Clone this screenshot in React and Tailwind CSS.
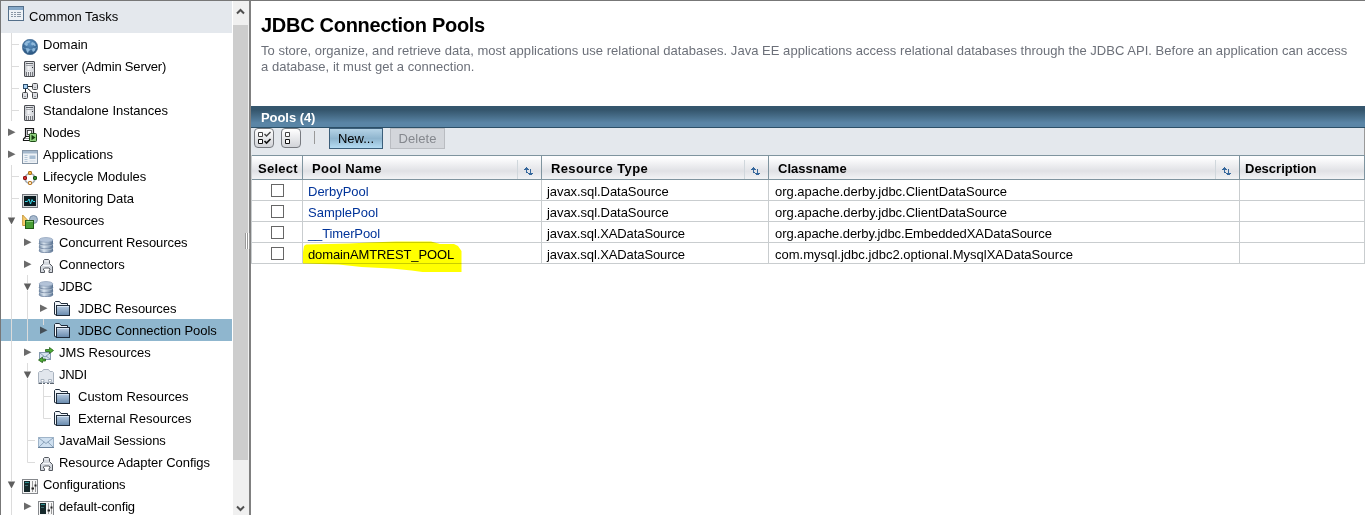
import React from "react";

const LINE = "#dcdcdc";

function Server() {
  return (
    <>
      <defs>
        <linearGradient id="srv" x1="0" x2="1">
          <stop offset="0" stopColor="#b9bcc1" />
          <stop offset=".4" stopColor="#f4f5f7" />
          <stop offset="1" stopColor="#c3c6cc" />
        </linearGradient>
      </defs>
      <rect x="2.5" y=".5" width="10" height="15" rx=".5" fill="url(#srv)" stroke="#4b4d52" />
      <path d="M4 2.5h7" stroke="#5f6268" />
      <path d="M4 4.500h7" stroke="#a3a6ac" />
      <path d="M10 6.500h1" stroke="#2f3236" />
      <path d="M3 9.500h9" stroke="#d9dbe0" />
      <path d="M4.500 11v4M6.500 11v4M8.500 11v4M10.500 11v4" stroke="#74777d" />
    </>
  );
}

function Database() {
  return (
    <>
      <defs>
        <linearGradient id="dbg" x1="0" x2="1">
          <stop offset="0" stopColor="#7087a2" />
          <stop offset=".35" stopColor="#d9e4ef" />
          <stop offset="1" stopColor="#56708f" />
        </linearGradient>
      </defs>
      <path d="M1 3v10.500c0 1.400 3 2.300 7 2.300s7-.9 7-2.300V3z" fill="url(#dbg)" />
      <path d="M1 6c0 1.300 3 2 7 2s7-.7 7-2M1 9.800c0 1.300 3 2 7 2s7-.7 7-2M1 13.600c0 1.300 3 2 7 2s7-.7 7-2" fill="none" stroke="#6d829e" strokeWidth=".8" />
      <path d="M1 7c0 1.300 3 2 7 2s7-.7 7-2M1 10.800c0 1.300 3 2 7 2s7-.7 7-2" fill="none" stroke="#e9eff6" strokeWidth=".4" />
      <ellipse cx="8" cy="2.900" rx="6.800" ry="2.400" fill="#b3c3d8" stroke="#8ea1ba" strokeWidth=".7" />
    </>
  );
}

function Folder() {
  return (
    <>
      <defs>
        <linearGradient id="fld" x1="0" y1="0" x2="0" y2="1">
          <stop offset="0" stopColor="#b9cde3" />
          <stop offset="1" stopColor="#6789ac" />
        </linearGradient>
      </defs>
      <path d="M.500 13.500V1.500L1.500.5h4l1.500 2h6.500v2" fill="#f1f5f9" stroke="#1f2c3b" />
      <path d="M.500 12.500l1.500 2h1" fill="none" stroke="#1f2c3b" />
      <rect x="2.500" y="4.500" width="13" height="10" fill="url(#fld)" stroke="#1f2c3b" />
      <path d="M3 5.500h12" stroke="#d8e5f2" />
    </>
  );
}

function Connector() {
  return (
    <>
      <path
        d="M5.500 4.500V1.500L6.500.5h4l1 1v3l3 3v6h-3.500v-2l1-.5v-1l-1-1H6.500l-1 1v1l1 .5v2H2.500v-6z"
        fill="#d4d8de"
        stroke="#54585f"
      />
      <path d="M6.500 2h4M5 6.500h7" stroke="#f7f8fa" />
    </>
  );
}

function Config() {
  return (
    <>
      <rect x=".5" y=".5" width="15" height="14" fill="#f6f6f6" stroke="#85888c" />
      <rect x="2" y="2" width="6" height="11" fill="#16292b" />
      <path d="M3 3.500h4" stroke="#2c8f8f" />
      <path d="M3 6.500h3" stroke="#3b6a6c" />
      <path d="M10.500 2v11M13.500 2v11" stroke="#999" />
      <path d="M9.500 9.500h2.500M12.500 6.500h2" stroke="#222" strokeWidth="2" />
    </>
  );
}

const glyphs = {
  globe: (
    <>
      <defs>
        <radialGradient id="glb" cx=".5" cy=".3" r=".7">
          <stop offset="0" stopColor="#5e94c4" />
          <stop offset="1" stopColor="#28527c" />
        </radialGradient>
      </defs>
      <circle cx="8" cy="8" r="7.700" fill="url(#glb)" stroke="#3c6690" strokeWidth=".6" />
      <path d="M2 5l2-2.500 3-1 1.500 1L7 4 5.500 4.500 6 6 4.500 7 3 6zM10 3l2.500 1 1.500 2.500-1.500.5-1-1L10 6.500 9 5zM4 9l3 .5 1 1.500-1.500 1.500-.5 2L4.500 12zM11 9l2.500.5-.5 2L11 13l-1-2z" fill="#8fb9db" />
      <path d="M1 8.500c4 2.500 10 2.500 14 0" fill="none" stroke="#82b2d8" strokeWidth=".5" />
    </>
  ),
  server: <Server />,
  clusters: (
    <>
      <path d="M3.500 5v5M6 3.500h5M5 5l7 6" stroke="#222" fill="none" />
      <rect x="1.500" y="1.500" width="4" height="4" fill="#a9d2f4" stroke="#2c4d6c" />
      <rect x="10.500" y=".5" width="5" height="6" rx="1" fill="#dcdee2" stroke="#46484d" />
      <rect x=".5" y="9.500" width="5" height="6" rx="1" fill="#dcdee2" stroke="#46484d" />
      <rect x="10.500" y="9.500" width="5" height="6" rx="1" fill="#dcdee2" stroke="#46484d" />
      <path d="M12 4.500h2M2 13.500h2M12 13.500h2" stroke="#9b9ea4" />
    </>
  ),
  nodes: (
    <>
      <path d="M3.500 1.500h8v8h-8z" fill="#d6d8dc" stroke="#151515" strokeWidth="1.200" />
      <rect x="5.500" y="3.500" width="4" height="4" fill="#fff" stroke="#333" strokeWidth=".8" />
      <path d="M3.500 10L1.500 12v1.500h8" fill="none" stroke="#151515" strokeWidth="1.200" />
      <path d="M3 11.500h5" stroke="#999" />
      <rect x="7.500" y="6.500" width="7" height="8" rx="1" fill="#8fd07e" stroke="#1d4c16" />
      <path d="M9.500 7.800v5.400l4-2.700z" fill="#143d0e" />
    </>
  ),
  apps: (
    <>
      <rect x=".5" y="1.500" width="15" height="13" fill="#eef2f6" stroke="#8494a5" />
      <rect x="1" y="2" width="14" height="2.500" fill="#a4b8cc" />
      <path d="M2.500 6.500h3M2.500 8.500h3M2.500 10.500h3M2.500 12.500h3" stroke="#b5c7d8" />
      <rect x="7.500" y="6.500" width="6" height="3.500" fill="#a8bed3" />
      <rect x="7.500" y="11" width="6" height="2" fill="#dfe6ed" />
    </>
  ),
  lifecycle: (
    <>
      <circle cx="8" cy="7.500" r="5" fill="none" stroke="#a2a9b1" strokeWidth="1.600" />
      <rect x="6.500" y=".5" width="3" height="3" rx=".5" fill="#f3b13b" stroke="#a8711c" />
      <rect x="11.500" y="5.500" width="3" height="3" rx=".5" fill="#318c2c" stroke="#174e16" />
      <rect x="1.500" y="5.500" width="3" height="3" rx=".5" fill="#d22f2f" stroke="#8b1717" />
      <rect x="6.500" y="10.500" width="3" height="3" rx=".5" fill="#fbe3c0" stroke="#b87b2b" />
    </>
  ),
  monitor: (
    <>
      <rect x=".5" y="1.500" width="15" height="13" fill="#d3d6d9" stroke="#74787d" />
      <rect x="2" y="3" width="12" height="10" fill="#0a1b20" />
      <path d="M3 8.500h2.500L7 6l1.500 5L10 6.500l1 2h2" fill="none" stroke="#38d5e3" />
    </>
  ),
  resources: (
    <>
      <path d="M.700 0v10.500h10z" fill="#fbcf70" stroke="#c08e2c" strokeWidth=".9" />
      <circle cx="11.500" cy="4.500" r="4" fill="#a9bbcf" stroke="#6f87a1" strokeWidth=".9" />
      <rect x="3.500" y="5.500" width="8" height="8" fill="#489f36" stroke="#1f5916" />
      <path d="M4.500 6.500h6.500" stroke="#8fce7c" />
    </>
  ),
  database: <Database />,
  connector: <Connector />,
  folder: <Folder />,
  jms: (
    <>
      <rect x="1.500" y="5.500" width="11" height="7" fill="#d6e2ee" stroke="#8499ae" />
      <path d="M2 6l5 4 5-4M2 12l4-3M12 12L8 9" fill="none" stroke="#7890a8" strokeWidth=".8" />
      <path d="M7.500 2.500h4V.5l4 3-4 3v-2h-4z" fill="#4fae35" stroke="#23611a" strokeWidth=".8" />
      <path d="M7.500 12h-3v-1.800L.5 13l4 2.700v-1.700h3z" fill="#4fae35" stroke="#23611a" strokeWidth=".8" />
    </>
  ),
  jndi: (
    <>
      <path
        d="M.5 13.500V3.500l1-1H4L5.500.5h5L12 2.500h2.500l1 1v10h-3v-1h1v-2h-3v2h1v1H5v-1h1v-2H3v2h1v1z"
        fill="#e1e6ed"
        stroke="#a9b3bf"
      />
      <path d="M.5 14.500h3.500M5 14.500h2M9 14.500h2M12 14.500h4" stroke="#5c6570" />
    </>
  ),
  mail: (
    <>
      <rect x=".5" y="2.500" width="15" height="10" fill="#cfe0f0" stroke="#9fb4c9" />
      <path d="M1 3l7 5.500L15 3M1 12l5.200-5M15 12L9.800 7" fill="none" stroke="#7a93ac" strokeWidth=".8" />
      <path d="M0 12.500h16" stroke="#6c859f" />
    </>
  ),
  config: <Config />,
};

function Icon({ name }) {
  return (
    <svg className={"ml-[3px] h-4 w-4 shrink-0 " + (name === "folder" ? "mt-[4px]" : "mt-[6px]")} viewBox="0 0 16 16">
      {glyphs[name]}
    </svg>
  );
}

/* Guide cell kinds: bar, tee, end, closed (collapsed arrow), joined (arrow under a line), open */
function Guide({ kind }) {
  return (
    <svg className="h-[22px] w-4 shrink-0" viewBox="0 0 16 22">
      {kind === "bar" && <path d="M8.500 0v22" stroke={LINE} />}
      {kind === "tee" && <path d="M8.500 0v22M9 11.500h7" stroke={LINE} />}
      {kind === "end" && <path d="M8.500 0v11.500h7.500" stroke={LINE} fill="none" />}
      {kind === "closed" && <path d="M5 7.500v7.500l7.500-3.750z" fill="#6b6b6b" />}
      {kind === "joined" && (
        <>
          <path d="M8.500 0v6" stroke={LINE} />
          <path d="M5 7.500v7.500l7.500-3.750z" fill="#444f57" />
        </>
      )}
      {kind === "open" && (
        <>
          <path d="M8.500 0v8M8.500 16v6" stroke={LINE} />
          <path d="M4.800 8.500h7.400l-3.700 7z" fill="#5f5f5f" />
        </>
      )}
    </svg>
  );
}

const tree = [
  [["tee"], "globe", "Domain", ""],
  [["tee"], "server", "server (Admin Server)", "tracking-[-0.19px]"],
  [["tee"], "clusters", "Clusters", ""],
  [["tee"], "server", "Standalone Instances", ""],
  [["closed"], "nodes", "Nodes", "tracking-[-0.1px]"],
  [["closed"], "apps", "Applications", ""],
  [["tee"], "lifecycle", "Lifecycle Modules", ""],
  [["tee"], "monitor", "Monitoring Data", "tracking-[-0.05px]"],
  [["open"], "resources", "Resources", "tracking-[-0.1px]"],
  [["bar", "closed"], "database", "Concurrent Resources", "tracking-[-0.08px]"],
  [["bar", "closed"], "connector", "Connectors", "tracking-[-0.08px]"],
  [["bar", "open"], "database", "JDBC", "tracking-[-0.2px]"],
  [["bar", "bar", "closed"], "folder", "JDBC Resources", "tracking-[-0.1px]"],
  [["bar", "bar", "joined"], "folder", "JDBC Connection Pools", "tracking-[-0.03px]", true],
  [["bar", "closed"], "jms", "JMS Resources", ""],
  [["bar", "open"], "jndi", "JNDI", "tracking-[-0.3px]"],
  [["bar", "bar", "tee"], "folder", "Custom Resources", ""],
  [["bar", "bar", "end"], "folder", "External Resources", ""],
  [["bar", "tee"], "mail", "JavaMail Sessions", "tracking-[-0.05px]"],
  [["bar", "end"], "connector", "Resource Adapter Configs", "tracking-[-0.03px]"],
  [["open"], "config", "Configurations", "tracking-[-0.1px]"],
  [["bar", "closed"], "config", "default-config", "tracking-[-0.15px]"],
];

function Sidebar() {
  return (
    <nav className="w-[231px] shrink-0 overflow-hidden">
      <div className="flex h-8 items-start bg-[#e4e8ed] pl-[7px]">
        <svg className="mt-[5px] h-4 w-4" viewBox="0 0 16 16">
          <rect x=".5" y=".5" width="15" height="14" fill="#eef2f6" stroke="#546f8a" />
          <rect x="1" y="1" width="14" height="3" fill="#86a9c9" />
          <path d="M3 6.500h2M6 6.500h2M9 6.500h4M3 8.500h2M6 8.500h2M9 8.500h4M3 10.500h2M6 10.500h2M9 10.500h4" stroke="#8a97a5" />
        </svg>
        <span className="ml-[5px] mt-[8px] text-[13px] leading-4">Common Tasks</span>
      </div>
      {tree.map(([guides, icon, label, tracking, selected]) => (
        <div key={label} className={"flex h-[22px] pl-[2px] whitespace-nowrap " + (selected ? "bg-[#8fb6ce]" : "")}>
          {guides.map((g, i) => (
            <Guide key={i} kind={g} />
          ))}
          <Icon name={icon} />
          <span className={"mt-[4px] text-[13px] leading-4 " + tracking + (guides.length === 3 ? " ml-[8px]" : " ml-[5px]")}>{label}</span>
        </div>
      ))}
    </nav>
  );
}

function ScrollBar() {
  return (
    <div className="relative ml-px flex w-4 shrink-0 flex-col bg-[#f0f0f0]">
      <svg className="h-6 w-[15px]" viewBox="0 0 15 24">
        <path d="M4 12.500L7.500 9l3.500 3.500" fill="none" stroke="#505050" strokeWidth="2" />
      </svg>
      <div className="h-[435px] w-[15px] bg-[#cdcdcd]" />
      <svg className="mt-auto h-4 w-[15px]" viewBox="0 0 15 16">
        <path d="M4 7.500L7.500 11l3.500-3.500" fill="none" stroke="#505050" strokeWidth="2" />
      </svg>
      <div className="absolute left-[12px] top-[232px] flex h-4 w-[5px] justify-between bg-white">
        <i className="w-px bg-[#999]" />
        <i className="w-px bg-[#999]" />
        <i className="w-px bg-[#999]" />
      </div>
    </div>
  );
}

function HeaderCell({ children, sortable, pad = "pl-[9px]", tracking = "" }) {
  return (
    <div className={"flex h-full min-w-0 justify-between border-r border-[#7f949f] bg-linear-to-b from-[#fdfdfe] from-10% via-[#e0e1e5] via-65% to-[#f2f3f5] " + pad}>
      <span className={"mt-[5px] whitespace-nowrap text-[13px] font-bold leading-4 " + tracking}>{children}</span>
      {sortable && (
        <span className="mt-1 flex w-6 border-l border-[#d0d7dc] bg-linear-to-b from-[#f6f7f8] via-[#e2e3e7] via-60% to-[#f2f3f5]">
          <svg className="ml-[5px] mt-[7px] h-[9px] w-[11px]" viewBox="0 0 11 9">
            <path d="M3.500 0v6M1 2.500h5M2 1.500h3M3 5.500h2M7.500 2v6M5 6.500h5M6 7.500h3" stroke="#35679c" fill="none" />
          </svg>
        </span>
      )}
    </div>
  );
}

const pools = [
  ["DerbyPool", "javax.sql.DataSource", "org.apache.derby.jdbc.ClientDataSource", "tracking-[-0.06px]", "tracking-[-0.03px]"],
  ["SamplePool", "javax.sql.DataSource", "org.apache.derby.jdbc.ClientDataSource", "tracking-[-0.06px]", "tracking-[-0.03px]"],
  ["__TimerPool", "javax.sql.XADataSource", "org.apache.derby.jdbc.EmbeddedXADataSource", "tracking-[-0.1px]", "tracking-[-0.08px]"],
  ["domainAMTREST_POOL", "javax.sql.XADataSource", "com.mysql.jdbc.jdbc2.optional.MysqlXADataSource", "tracking-[-0.1px]", "tracking-[0.02px]"],
];

const cell = "h-full border-r border-b border-[#c9cdcf] pl-[5px] pt-[4px] text-[13px] leading-4 whitespace-nowrap ";

function PoolsTable() {
  return (
    <div className="border-l border-[#c9cdcf]">
      <div className="grid h-[25px] grid-cols-[51px_239px_227px_471px_1fr] border-y border-[#7f949f]">
        <HeaderCell pad="pl-[6px]" tracking="tracking-[0.25px]">Select</HeaderCell>
        <HeaderCell sortable tracking="tracking-[0.3px]">Pool Name</HeaderCell>
        <HeaderCell sortable tracking="tracking-[0.37px]">Resource Type</HeaderCell>
        <HeaderCell sortable>Classname</HeaderCell>
        <HeaderCell pad="pl-[5px]">Description</HeaderCell>
      </div>
      {pools.map(([name, type, cls, typeTracking, clsTracking], i) => (
        <div key={name} className="grid h-[21px] grid-cols-[51px_239px_227px_471px_1fr]">
          <div className="flex h-full justify-center border-r border-b border-[#c9cdcf] pt-[4px]">
            <span className="h-[13px] w-[13px] border border-[#666] bg-white" />
          </div>
          <div className={cell + "relative " + (i === 3 ? "tracking-[-0.11px] text-[#003]" : i === 2 ? "tracking-[-0.12px] text-[#039]" : "text-[#039]")}>
            {name}
            {i === 3 && (
              <svg className="absolute left-0 top-[-4px] h-[34px] w-[164px] mix-blend-multiply" viewBox="303 239 164 34">
                <path d="M303.500 249l.500-3 2-1.500 43-1 20-1 27-1h35l9 2.500h14l4 2 3.500 5v21h-39l-11-1.500-20-2-30-1.500-23-2.500-36-1v-8z" fill="#ff0" />
              </svg>
            )}
          </div>
          <div className={cell + typeTracking}>{type}</div>
          <div className={cell + clsTracking + " pl-[6px]"}>{cls}</div>
          <div className={cell} />
        </div>
      ))}
    </div>
  );
}

function ToolIcon({ checked }) {
  return (
    <span className="flex h-5 w-5 items-center justify-center rounded-[4px] border border-[#777a80] bg-linear-to-b from-white to-[#d2d4d9]">
      <svg className="h-4 w-4" viewBox="0 0 16 16">
        <path d="M2.500 2.500h4v4h-4z" fill="#fff" stroke="#444" />
        <path d="M2.500 9.500h4v4h-4z" fill="#fff" stroke="#111" />
        {checked && (
          <>
            <path d="M8.500 4l2 2 4-4" fill="none" stroke="#444" strokeWidth="1.400" />
            <path d="M8.500 11l2 2 4-4" fill="none" stroke="#111" strokeWidth="1.600" />
          </>
        )}
      </svg>
    </span>
  );
}

export default function App() {
  return (
    <div className="flex h-[515px] w-[1365px] overflow-hidden border-t border-l border-[#777] bg-white font-['Liberation_Sans',Arial,sans-serif] text-[13px] text-black">
      <Sidebar />
      <ScrollBar />
      <main className="min-w-0 flex-1 border-l-2 border-[#808080]">
        <h1 className="ml-[10px] pt-[12px] text-[20px] font-bold leading-6 tracking-[-0.29px]">JDBC Connection Pools</h1>
        <p className="ml-[10px] mt-[6px] h-[63px] whitespace-nowrap text-[13px] leading-4 tracking-[0.028px] text-[#6c7079]">
          To store, organize, and retrieve data, most applications use relational databases. Java EE applications access relational databases through the JDBC API. Before an application can access
          <br />
          a database, it must get a connection.
        </p>
        <div className="h-[22px] border-b border-[#2c4f67] bg-linear-to-b from-[#35566d] from-20% to-[#5a85a6] to-80% pl-[10px] pt-[4px] text-[13px] font-bold leading-4 tracking-[-0.06px] text-white">Pools (4)</div>
        <div className="flex h-[27px] items-start border-r border-[#999] bg-[#e4e8ed] pl-[3px]">
          <ToolIcon checked />
          <span className="w-[7px]" />
          <ToolIcon />
          <span className="ml-[13px] mt-[3px] h-[13px] w-px bg-[#999]" />
          <button className="ml-[14px] h-[21px] w-[54px] border border-[#3c5f7b] bg-linear-to-b from-[#b5d3e6] via-[#8fb5ce] via-50% to-[#b5dcf3] text-[13px] leading-4">New...</button>
          <button className="ml-[7px] h-[21px] w-[55px] border border-[#b9bcc1] bg-[#d3d6db] text-[13px] leading-4 tracking-[0.1px] text-[#85888e]">Delete</button>
        </div>
        <PoolsTable />
      </main>
    </div>
  );
}
